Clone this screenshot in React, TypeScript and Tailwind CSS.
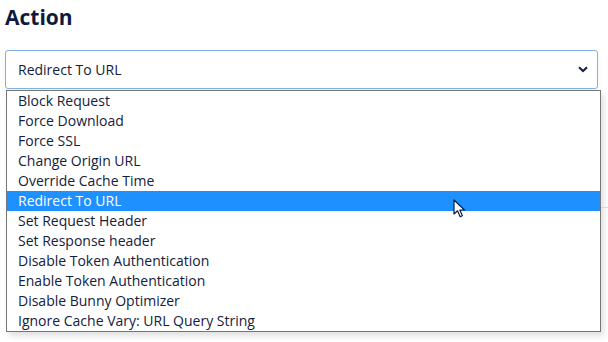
const options = [
  'Block Request',
  'Force Download',
  'Force SSL',
  'Change Origin URL',
  'Override Cache Time',
  'Redirect To URL',
  'Set Request Header',
  'Set Response header',
  'Disable Token Authentication',
  'Enable Token Authentication',
  'Disable Bunny Optimizer',
  'Ignore Cache Vary: URL Query String',
];

const selected = 'Redirect To URL';

function Cursor() {
  return (
    <svg
      aria-hidden
      width="14"
      height="20"
      viewBox="0 0 14 20"
      className="absolute left-[453px] top-[199px]"
    >
      <path
        d="M1 1 L1 15 L4.5 11.8 L7.2 17.8 L9.4 16.8 L6.8 11 L11.5 11 Z"
        fill="#fff"
        stroke="#0d1b3e"
        strokeWidth="1.2"
        strokeLinejoin="round"
      />
    </svg>
  );
}

export default function App() {
  return (
    <div
      className="relative h-[342px] w-[608px] overflow-hidden bg-white text-[#14213d]"
      style={{ fontFamily: '"Open Sans", "Noto Sans", sans-serif' }}
    >
      <h2 className="pl-[5px] pt-[1px] text-[21px] leading-[32px] font-bold text-[#0d1b3e]">
        Action
      </h2>

      <div className="relative mt-[17px] ml-[5px] w-[593px]">
        <div className="flex h-[39px] items-center justify-between rounded-[3px] border border-[#7eb3e4] bg-white pl-[12px] pr-[9px] shadow-[0_3px_6px_rgba(0,0,0,0.06)]">
          <span className="text-[14px]">{selected}</span>
          <svg aria-hidden width="10" height="7" viewBox="0 0 10 7">
            <path d="M1 1.2 L5 5 L9 1.2" fill="none" stroke="#14213d" strokeWidth="2" />
          </svg>
        </div>

        <ul className="absolute top-[40px] left-[1px] w-[595px] border border-[#767676] bg-white shadow-[3px_4px_6px_rgba(0,0,0,0.12)]">
          {options.map((option) => (
            <li
              key={option}
              className={
                option === selected
                  ? 'h-[20px] bg-[#1e90ff] pl-[11px] text-[14px] leading-[20px] text-white'
                  : 'h-[20px] pl-[11px] text-[14px] leading-[20px]'
              }
            >
              {option}
            </li>
          ))}
        </ul>
      </div>

      <div className="absolute left-[601px] top-[207px] h-px w-[7px] bg-[#d8d8d8]" />
      <Cursor />
    </div>
  );
}
